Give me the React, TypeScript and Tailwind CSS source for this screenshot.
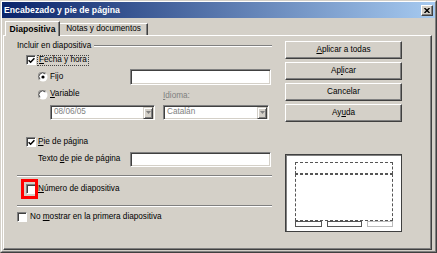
import React from "react";

const U = ({ children }: { children: React.ReactNode }) => (
  <span className="underline underline-offset-1">{children}</span>
);

function Check({ checked = false }: { checked?: boolean }) {
  return (
    <div className="w-[10px] h-[10px] shrink-0 bg-white border border-t-[#808080] border-l-[#808080] border-b-white border-r-white shadow-[inset_1px_1px_0_#404040] flex items-center justify-center">
      {checked && (
        <svg width="7" height="7" viewBox="0 0 7 7">
          <path d="M0.6 3.2 L2.6 5.2 L6.4 1.2" stroke="#000" strokeWidth="1.5" fill="none" />
        </svg>
      )}
    </div>
  );
}

function Radio({ checked = false }: { checked?: boolean }) {
  return (
    <svg width="10" height="10" viewBox="0 0 10 10" className="shrink-0">
      <circle cx="5" cy="5" r="4.5" fill="#fff" />
      <path d="M1.2 7.8 A4.3 4.3 0 0 1 7.8 1.2" stroke="#808080" strokeWidth="1" fill="none" />
      <path d="M2 7.2 A3.3 3.3 0 0 1 7.2 2" stroke="#404040" strokeWidth="1" fill="none" />
      {checked && <circle cx="5" cy="5" r="1.6" fill="#000" />}
    </svg>
  );
}

function Field({ w, children, gray = false }: { w: string; children?: React.ReactNode; gray?: boolean }) {
  return (
    <div
      className={`${w} h-full bg-white border border-t-[#808080] border-l-[#808080] border-r-white border-b-white shadow-[inset_1px_1px_0_#404040,inset_-1px_-1px_0_#d4d0c8] flex items-center pl-[3px] ${gray ? "text-[#808080]" : ""}`}
    >
      {children}
    </div>
  );
}

function Combo({ w, text }: { w: string; text: string }) {
  return (
    <div className={`${w} h-full bg-white border border-t-[#808080] border-l-[#808080] border-r-white border-b-white shadow-[inset_1px_1px_0_#404040,inset_-1px_-1px_0_#d4d0c8] flex items-center`}>
      <span className="flex-1 pl-[3px] text-[#808080]">{text}</span>
      <div className="w-[10px] h-[12px] mr-[1px] bg-[#d4d0c8] border border-t-[#d4d0c8] border-l-[#d4d0c8] border-r-[#404040] border-b-[#404040] shadow-[inset_1px_1px_0_#fff,inset_-1px_-1px_0_#808080] flex items-center justify-center">
        <svg width="5" height="3" viewBox="0 0 5 3">
          <path d="M0 0 H5 L2.5 3 Z" fill="#808080" />
        </svg>
      </div>
    </div>
  );
}

function Btn({ children }: { children: React.ReactNode }) {
  return (
    <div className="w-[117px] h-[18px] bg-[#d4d0c8] border border-t-white border-l-white border-r-[#404040] border-b-[#404040] shadow-[inset_-1px_-1px_0_#808080] flex items-center justify-center">
      {children}
    </div>
  );
}

function Sep() {
  return <div className="h-[2px] border-t border-t-[#808080] border-b border-b-white" />;
}

export default function App() {
  return (
    <div className="w-[437px] h-[253px] bg-[#d4d0c8] border border-t-[#d4d0c8] border-l-[#d4d0c8] border-r-[#404040] border-b-[#404040] text-[8.2px] leading-none text-black [font-family:'Liberation_Sans',Arial,sans-serif]">
      <div className="w-full h-full border border-t-white border-l-white border-r-[#808080] border-b-[#808080] flex flex-col">
        {/* Title bar */}
        <div className="h-[16px] bg-[linear-gradient(to_right,#0a246a,#a6caf0)] flex items-center pl-[2px] pr-[2px]">
          <span className="text-white font-bold text-[8.7px]">Encabezado y pie de página</span>
          <div className="ml-auto w-[12px] h-[11px] bg-[#d4d0c8] border border-t-white border-l-white border-r-[#404040] border-b-[#404040] shadow-[inset_-1px_-1px_0_#808080] flex items-center justify-center">
            <svg width="6" height="5" viewBox="0 0 6 5">
              <path d="M0.5 0 L5.5 5 M5.5 0 L0.5 5" stroke="#000" strokeWidth="1.4" />
            </svg>
          </div>
        </div>

        {/* Tabs */}
        <div className="mt-[3px] h-[14px] flex items-end pl-[3px] relative z-10">
          <div className="h-[15px] -mb-[1px] w-[55px] bg-[#d4d0c8] border-t border-l border-t-white border-l-white border-r border-r-[#404040] shadow-[inset_-1px_0_0_#808080] flex items-center justify-center font-bold text-[8.6px]">
            Diapositiva
          </div>
          <div className="h-[12px] w-[88px] border-t border-t-white border-r border-r-[#404040] shadow-[inset_-1px_0_0_#808080] flex items-center justify-center">
            Notas y documentos
          </div>
        </div>

        {/* Panel */}
        <div className="ml-[1px] w-[429px] h-[215px] border border-t-white border-l-white border-r-[#404040] border-b-[#404040] shadow-[inset_-1px_-1px_0_#808080] flex pl-[13px] pt-[5px]">
          {/* Left column */}
          <div className="w-[255px] flex flex-col">
            <div className="h-[10px] flex items-center">
              <span>Incluir en diapositiva</span>
              <div className="flex-1 ml-[3px] h-[2px] border-t border-t-[#808080] border-b border-b-white" />
            </div>

            <div className="mt-[3px] h-[12px] pl-[9px] flex items-center">
              <Check checked />
              <span className="ml-[1px] h-[11px] border border-dotted border-[#444] px-[1px] flex items-center">
                <U>F</U>echa y hora
              </span>
            </div>

            <div className="mt-[3px] h-[16px] pl-[21px] flex items-center">
              <div className="w-[92px] flex items-center">
                <Radio checked />
                <span className="ml-[2px]">
                  Fi<U>j</U>o
                </span>
              </div>
              <Field w="w-[141px]" />
            </div>

            <div className="mt-[4px] h-[11px] pl-[21px] flex items-center">
              <div className="w-[125px] flex items-center">
                <Radio />
                <span className="ml-[2px]">
                  <U>V</U>ariable
                </span>
              </div>
              <span className="text-[#808080] mt-[3px]">
                <U>I</U>dioma:
              </span>
            </div>

            <div className="mt-[5px] h-[15px] pl-[33px] flex">
              <Combo w="w-[105px]" text="08/06/05" />
              <div className="ml-[8px] h-full">
                <Combo w="w-[106px]" text="Catalán" />
              </div>
            </div>

            <div className="mt-[16px] h-[12px] pl-[9px] flex items-center">
              <Check checked />
              <span className="ml-[2px]">
                <U>P</U>ie de página
              </span>
            </div>

            <div className="mt-[4px] h-[15px] pl-[21px] flex items-center">
              <div className="w-[92px]">
                Texto <U>d</U>e pie de página
              </div>
              <Field w="w-[141px]" />
            </div>

            <div className="mt-[8px]">
              <Sep />
            </div>

            <div className="mt-[5px] h-[14px] pl-[9px] flex items-center">
              <div className="relative">
                <Check />
                <div className="absolute -left-[5px] -top-[5px] w-[17px] h-[20px] border-[3px] border-[#ff0000]" />
              </div>
              <span className="ml-[2px]">
                <U>N</U>úmero de diapositiva
              </span>
            </div>

            <div className="mt-[9px]">
              <Sep />
            </div>

            <div className="mt-[5px] h-[10px] flex items-center">
              <Check />
              <span className="ml-[3px]">
                No <U>m</U>ostrar en la primera diapositiva
              </span>
            </div>
          </div>

          {/* Right column */}
          <div className="ml-[13px] w-[117px] flex flex-col">
            <div className="flex flex-col gap-[3px]">
              <Btn>
                <span>
                  <U>A</U>plicar a todas
                </span>
              </Btn>
              <Btn>
                <span>
                  Ap<U>l</U>icar
                </span>
              </Btn>
              <Btn>
                <span>Cancelar</span>
              </Btn>
              <Btn>
                <span>
                  Ay<U>u</U>da
                </span>
              </Btn>
            </div>

            <div className="mt-[32px] w-[117px] h-[78px] bg-white border border-[#404040] shadow-[inset_1px_1px_0_#808080] pl-[9px] pt-[7px]">
              <div className="w-[98px] h-[12px] border border-dashed border-[#555]" />
              <div className="w-[98px] h-[47px] border border-dashed border-[#555]" />
              <div className="w-[98px] h-[6px] flex">
                <div className="w-[27px] h-full border border-[#555]" />
                <div className="ml-[5px] w-[35px] h-full border border-[#555]" />
                <div className="ml-[5px] w-[26px] h-full border border-[#bbb]" />
              </div>
            </div>
          </div>
        </div>
      </div>
    </div>
  );
}
